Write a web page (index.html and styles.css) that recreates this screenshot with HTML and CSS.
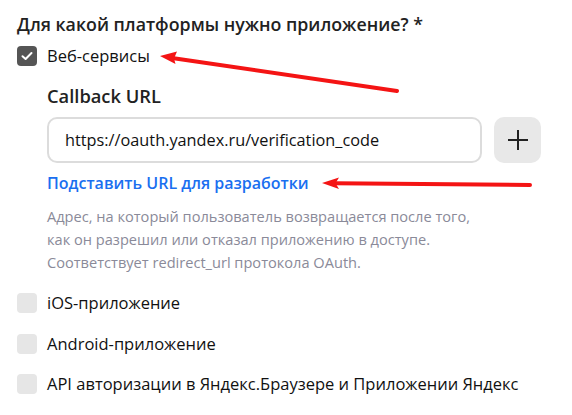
FILE: index.html
```html
<!DOCTYPE html>
<html lang="ru">
<head>
<meta charset="utf-8">
<title>Платформы</title>
<link rel="stylesheet" href="styles.css">
</head>
<body>
<div class="page">
  <div class="title">Для какой платформы нужно приложение? *</div>

  <label class="option option-first">
    <span class="box box-checked">
      <svg width="12" height="10" viewBox="0 0 12 10"><path d="M1.5 5.2 L4.6 8 L10.5 2" fill="none" stroke="#fff" stroke-width="2" stroke-linecap="round" stroke-linejoin="round"/></svg>
    </span>
    <span class="option-text">Веб-сервисы</span>
  </label>

  <div class="nested">
    <div class="field-label">Callback URL</div>
    <div class="input-row">
      <div class="input">https://oauth.yandex.ru/verification_code</div>
      <div class="plus">
        <svg width="22" height="22" viewBox="0 0 22 22"><path d="M11 1 V21 M1 11 H21" stroke="#222" stroke-width="2"/></svg>
      </div>
    </div>
    <div class="link">Подставить URL для разработки</div>
    <div class="help">Адрес, на который пользователь возвращается после того,<br>как он разрешил или отказал приложению в доступе.<br>Соответствует redirect_url протокола OAuth.</div>
  </div>

  <label class="option option-ios">
    <span class="box"></span>
    <span class="option-text">iOS-приложение</span>
  </label>
  <label class="option option-next">
    <span class="box"></span>
    <span class="option-text">Android-приложение</span>
  </label>
  <label class="option option-last">
    <span class="box"></span>
    <span class="option-text">API авторизации в Яндекс.Браузере и Приложении Яндекс</span>
  </label>
</div>

<svg class="arrows" width="572" height="415" viewBox="0 0 572 415">
  <line x1="397" y1="91" x2="172" y2="58" stroke="#f41414" stroke-width="4" stroke-linecap="round"/>
  <polygon points="160,56 177,51.5 174,58.5 175.5,64" fill="#f41414"/>
  <line x1="530" y1="185" x2="334" y2="183.2" stroke="#f41414" stroke-width="4" stroke-linecap="round"/>
  <polygon points="322,183 339,177.5 335.5,183.2 339,189" fill="#f41414"/>
</svg>
</body>
</html>
```

FILE: styles.css
```css
html, body {
  margin: 0;
  padding: 0;
  background: #fff;
}

body {
  font-family: "Open Sans", "Noto Sans", Arial, sans-serif;
  color: #1f1f1f;
  position: relative;
  width: 572px;
  height: 415px;
  overflow: hidden;
}

.page {
  padding: 12px 17px 0;
}

.title {
  font-size: 17.8px;
  font-weight: 600;
  line-height: 24px;
  color: #222;
}

.option {
  display: flex;
  align-items: center;
  gap: 10px;
  height: 24px;
}

.option-first { margin-top: 8px; }
.option-ios { margin-top: 17px; }
.option-next { margin-top: 17px; }
.option-last { margin-top: 16px; }

.box {
  width: 20px;
  height: 20px;
  border-radius: 4px;
  background: #e6e6e6;
  display: flex;
  align-items: center;
  justify-content: center;
  flex: none;
}

.box-checked {
  background: #555;
}

.option-text {
  font-size: 16.5px;
  line-height: 24px;
  color: #111;
}

.nested {
  padding-left: 30px;
}

.field-label {
  margin-top: 16px;
  font-size: 18.3px;
  font-weight: 600;
  line-height: 24px;
  color: #222;
}

.input-row {
  margin-top: 9px;
  display: flex;
  gap: 12px;
}

.input {
  width: 435px;
  height: 46px;
  box-sizing: border-box;
  border: 2px solid #dcdcdc;
  border-radius: 10px;
  padding: 0 16px;
  display: flex;
  align-items: center;
  font-size: 16.3px;
  color: #111;
}

.plus {
  width: 47px;
  height: 46px;
  border-radius: 10px;
  background: #e8e8e8;
  display: flex;
  align-items: center;
  justify-content: center;
}

.link {
  margin-top: 10px;
  font-size: 16px;
  font-weight: 600;
  line-height: 20px;
  color: #1a6ff0;
}

.help {
  margin-top: 12px;
  font-size: 14.6px;
  line-height: 23px;
  color: #8a8a99;
}

.arrows {
  position: absolute;
  left: 0;
  top: 0;
  pointer-events: none;
}
```
